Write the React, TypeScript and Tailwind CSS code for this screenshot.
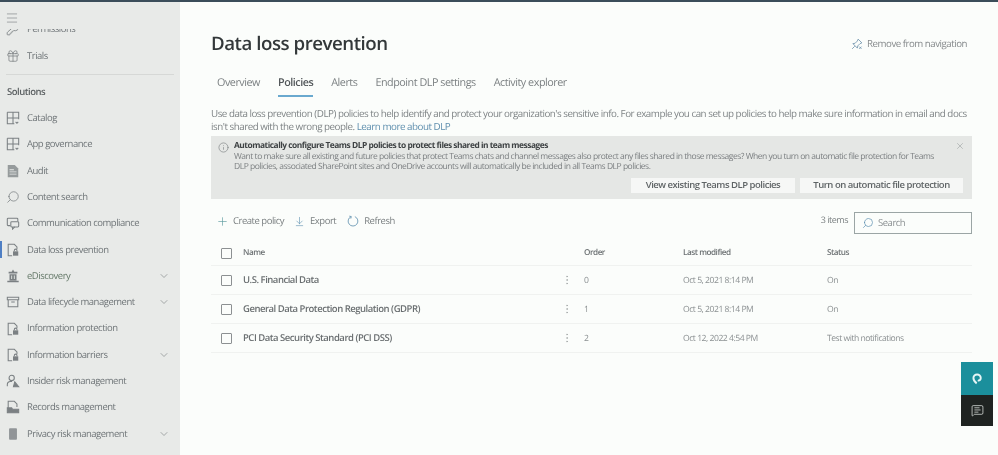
import { ArrowDownToLine, ChevronDown, Gift, Info, KeyRound, Menu, MessageSquareText, MoreVertical, Plus, Search, X } from 'lucide-react';
import type { ReactNode } from 'react';

const font = "font-['Open_Sans','Noto_Sans',sans-serif]";

function GridIcon() {
  return (
    <svg viewBox="0 0 16 16" className="w-[14px] h-[14px]" fill="none" stroke="currentColor" strokeWidth="1.2">
      <path d="M1.500 1.500h13v8M1.500 1.500v13h8M8 1.500v13M1.500 8h13" />
      <path d="M11 12.500l1.500 1.500 1.500-1.500" />
    </svg>
  );
}

function DocIcon() {
  return (
    <svg viewBox="0 0 16 16" className="w-[14px] h-[14px]" fill="currentColor">
      <path d="M2 1h8l4 4v10H2z" opacity="0.75" />
      <path d="M4 6h5v1H4zM4 8.500h8v1H4zM4 11h8v1H4z" fill="#e8eae8" />
    </svg>
  );
}

function ChatIcon() {
  return (
    <svg viewBox="0 0 16 16" className="w-[14px] h-[14px]" fill="none" stroke="currentColor" strokeWidth="1.2">
      <path d="M5 11H2.500A1 1 0 0 1 1.500 10V3.500a1 1 0 0 1 1-1h10a1 1 0 0 1 1 1V6" />
      <rect x="5.500" y="6.500" width="9" height="6" rx="1" />
      <path d="M7.500 12.500V15l2.500-2.500" />
    </svg>
  );
}

function LockDocIcon() {
  return (
    <svg viewBox="0 0 16 16" className="w-[14px] h-[14px]" fill="none" stroke="currentColor" strokeWidth="1.2">
      <path d="M7 14.500H2.500v-13h7l3 3V7" />
      <rect x="8" y="9.500" width="6" height="5" fill="currentColor" stroke="none" />
      <path d="M9.500 9.500V8.500a1.500 1.500 0 0 1 3 0v1" />
    </svg>
  );
}

function BankIcon() {
  return (
    <svg viewBox="0 0 16 16" className="w-[14px] h-[14px]" fill="currentColor">
      <path d="M8 0.500l1.500 2.500H13v2H3V3h3.500zM4 6h8v7H4zM1.500 13.500h13V15h-13z" />
      <path d="M6 7.500h1v4H6zM9 7.500h1v4H9z" fill="#e8eae8" />
    </svg>
  );
}

function ArchiveIcon() {
  return (
    <svg viewBox="0 0 16 16" className="w-[14px] h-[14px]" fill="none" stroke="currentColor" strokeWidth="1.2">
      <path d="M1.500 2.500h13v3h-13zM2.500 5.500v8h11v-8M6 8h4" />
    </svg>
  );
}

function PersonIcon() {
  return (
    <svg viewBox="0 0 16 16" className="w-[14px] h-[14px]" fill="none" stroke="currentColor" strokeWidth="1.2">
      <circle cx="6.500" cy="4.500" r="3" />
      <path d="M1.500 14v-2a3.500 3.500 0 0 1 3.500-3.500h2" />
      <path d="M10 9l4.500 5.500h-6z" fill="currentColor" />
    </svg>
  );
}

function RecordsIcon() {
  return (
    <svg viewBox="0 0 16 16" className="w-[14px] h-[14px]" fill="none" stroke="currentColor" strokeWidth="1.2">
      <path d="M2.500 9V1.500h7l3 3V8" />
      <path d="M1.500 9h5l1 1.500h7v4h-13z" fill="currentColor" />
    </svg>
  );
}

function PrivacyIcon() {
  return (
    <svg viewBox="0 0 16 16" className="w-[14px] h-[14px]" fill="currentColor">
      <path d="M4.500 1.500h7a1 1 0 0 1 1 1v11a1 1 0 0 1-1 1h-7a1 1 0 0 1-1-1v-11a1 1 0 0 1 1-1z" opacity="0.8" />
    </svg>
  );
}

function RefreshIcon() {
  return (
    <svg viewBox="0 0 16 16" className="w-[12px] h-[12px] text-[#6d9ab5]" fill="none" stroke="currentColor" strokeWidth="1.2">
      <path d="M5.500 2.200a6.500 6.500 0 1 0 5 0" />
      <path d="M3 1.500l2.700.600-.6 2.700" />
    </svg>
  );
}

function UnpinIcon() {
  return (
    <svg viewBox="0 0 16 16" className="w-[12px] h-[12px] text-[#6f93ad]" fill="none" stroke="currentColor" strokeWidth="1.1">
      <path d="M9.500 1.500l5 5-2.500 1-3 3-.5 3-6-6 3-.5 3-3z" />
      <path d="M5 11l-3.500 3.500" />
      <path d="M11 11.500l3 3M14 11.500l-3 3" />
    </svg>
  );
}

type NavItem = { label: string; icon: ReactNode; chevron?: boolean; active?: boolean };

const navItems: NavItem[] = [
  { label: 'Catalog', icon: <GridIcon /> },
  { label: 'App governance', icon: <GridIcon /> },
  { label: 'Audit', icon: <DocIcon /> },
  { label: 'Content search', icon: <Search className="w-[14px] h-[14px] -scale-x-100" strokeWidth={1.3} /> },
  { label: 'Communication compliance', icon: <ChatIcon /> },
  { label: 'Data loss prevention', icon: <LockDocIcon />, active: true },
  { label: 'eDiscovery', icon: <BankIcon />, chevron: true },
  { label: 'Data lifecycle management', icon: <ArchiveIcon />, chevron: true },
  { label: 'Information protection', icon: <LockDocIcon /> },
  { label: 'Information barriers', icon: <LockDocIcon />, chevron: true },
  { label: 'Insider risk management', icon: <PersonIcon /> },
  { label: 'Records management', icon: <RecordsIcon /> },
  { label: 'Privacy risk management', icon: <PrivacyIcon />, chevron: true },
];

const tabs = ['Overview', 'Policies', 'Alerts', 'Endpoint DLP settings', 'Activity explorer'];

const policies = [
  { name: 'U.S. Financial Data', order: '0', modified: 'Oct 5, 2021 8:14 PM', status: 'On' },
  { name: 'General Data Protection Regulation (GDPR)', order: '1', modified: 'Oct 5, 2021 8:14 PM', status: 'On' },
  { name: 'PCI Data Security Standard (PCI DSS)', order: '2', modified: 'Oct 12, 2022 4:54 PM', status: 'Test with notifications' },
];

const tableCols = 'grid grid-cols-[22px_318px_23px_99px_144px_1fr] items-center';

function Sidebar() {
  return (
    <aside className="w-[180px] shrink-0 bg-[#e8eae8] flex flex-col overflow-hidden text-[#6f7578]">
      <div className="h-[27px] shrink-0 pl-[5px] pt-[9px]">
        <Menu className="w-[14px] h-[14px] text-[#8d9294]" strokeWidth={1.3} />
      </div>
      <div className="h-[14px] shrink-0 overflow-hidden">
        <div className="-mt-[13px] h-[26px] flex items-center pl-[6px] gap-[7px]">
          <KeyRound className="w-[14px] h-[14px]" strokeWidth={1.3} />
          <span className="text-[9.5px]">Permissions</span>
        </div>
      </div>
      <div className="flex items-center h-[26px] shrink-0 pl-[6px] gap-[7px]">
        <Gift className="w-[14px] h-[14px] text-[#7b8083]" strokeWidth={1.3} />
        <span className="text-[9.5px]">Trials</span>
      </div>
      <div className="mx-[6px] mt-[5px] h-px shrink-0 bg-[#d6d8d6]" />
      <div className="h-[30px] shrink-0 flex items-center pt-[5px] pl-[7px] text-[9.5px] font-semibold text-[#5b6062]">Solutions</div>
      <nav className="flex flex-col">
        {navItems.map((item) => (
          <div key={item.label} className="relative h-[26.3px] flex items-center pl-[6px] pr-[10px] gap-[7px] shrink-0">
            {item.active && <span className="absolute left-0 top-[5px] bottom-[5px] w-[2px] bg-[#4f7fc4]" />}
            <span className="w-[14px] flex justify-center text-[#7b8083]">{item.icon}</span>
            <span className={`text-[9.5px] flex-1 whitespace-nowrap ${item.label === 'eDiscovery' ? 'text-[#667a6a]' : ''}`}>{item.label}</span>
            {item.chevron && <ChevronDown className="w-[12px] h-[12px] text-[#85898b]" strokeWidth={1.4} />}
          </div>
        ))}
      </nav>
    </aside>
  );
}

function Banner() {
  return (
    <div className="mt-[3px] h-[63px] bg-[#e5e7e5] flex flex-col pl-[7px] pr-[7px] pt-[5px]">
      <div className="flex items-start gap-[5px]">
        <Info className="w-[11px] h-[11px] mt-[1px] shrink-0 text-[#7c8082]" strokeWidth={1.4} />
        <div className="flex-1 text-[8.5px] leading-[10.500px] text-[#7b7f81]">
          <p className="font-bold text-[8.4px] text-[#3e4244]">Automatically configure Teams DLP policies to protect files shared in team messages</p>
          <p className="w-[700px]">
            Want to make sure all existing and future policies that protect Teams chats and channel messages also protect any files shared in those messages? When you turn on automatic file protection for Teams DLP policies, associated SharePoint sites and OneDrive accounts will automatically be included in all Teams DLP policies.
          </p>
        </div>
        <X className="w-[10px] h-[10px] shrink-0 text-[#9a9e9f]" strokeWidth={1.4} />
      </div>
      <div className="flex justify-end gap-[5px] mt-[5px] mr-[2px]">
        <button className="w-[164px] h-[15px] bg-[#f6f7f6] text-[9.500px] font-semibold text-[#5f6466] flex items-center justify-center">View existing Teams DLP policies</button>
        <button className="w-[163px] h-[15px] bg-[#f6f7f6] text-[9.500px] font-semibold text-[#5f6466] flex items-center justify-center">Turn on automatic file protection</button>
      </div>
    </div>
  );
}

function Toolbar() {
  return (
    <div className="flex items-center h-[24px] mt-[10px] text-[9.5px] text-[#7b8082]">
      <div className="flex items-center gap-[4px] ml-[5px]">
        <Plus className="w-[13px] h-[13px] text-[#5b9a9e]" strokeWidth={1.2} />
        <span>Create policy</span>
      </div>
      <div className="flex items-center gap-[5px] ml-[10px]">
        <ArrowDownToLine className="w-[11px] h-[11px] text-[#5d8fb0]" strokeWidth={1.3} />
        <span>Export</span>
      </div>
      <div className="flex items-center gap-[5px] ml-[11px]">
        <RefreshIcon />
        <span>Refresh</span>
      </div>
      <span className="ml-auto mr-[6px] -mt-[2px] text-[9px]">3 items</span>
      <div className="w-[118px] h-[22px] mt-[3px] border border-[#9ba5a5] flex items-center pl-[7px] gap-[4px] text-[#8a8f91]">
        <Search className="w-[12px] h-[12px] -scale-x-100 text-[#5d8fb0]" strokeWidth={1.4} />
        <span className="mt-[1px]">Search</span>
      </div>
    </div>
  );
}

function PolicyTable() {
  return (
    <div className="mt-[6px]">
      <div className={`${tableCols} h-[27px] pt-[2px] border-b border-[#f0f2f0] pl-[10px] text-[8.2px] font-semibold text-[#6d7274]`}>
        <span className="w-[11px] h-[11px] border border-[#8c9092] rounded-[1px]" />
        <span>Name</span>
        <span />
        <span>Order</span>
        <span>Last modified</span>
        <span>Status</span>
      </div>
      {policies.map((p) => (
        <div key={p.name} className={`${tableCols} h-[29px] border-b border-[#f0f2f0] pl-[10px] text-[8.6px] text-[#8b9092]`}>
          <span className="w-[11px] h-[11px] border border-[#8c9092] rounded-[1px]" />
          <span className="text-[9.5px] font-semibold text-[#6a6f71]">{p.name}</span>
          <MoreVertical className="w-[12px] h-[12px] text-[#a5a9aa]" strokeWidth={1.5} />
          <span>{p.order}</span>
          <span>{p.modified}</span>
          <span>{p.status}</span>
        </div>
      ))}
    </div>
  );
}

export default function App() {
  return (
    <div className={`${font} [text-rendering:geometricPrecision] tracking-[-0.03em] w-[998px] h-[455px] overflow-hidden flex flex-col bg-[#fbfdfb] relative blur-[0.5px]`}>
      <div className="h-[2px] shrink-0 bg-[#3b4d5a]" />
      <div className="flex flex-1 min-h-0">
        <Sidebar />
        <main className="flex-1 pl-[31px] pr-[26px] flex flex-col">
          <div className="flex items-center justify-between h-[36px] mt-[24px]">
            <h1 className="text-[18.7px] font-semibold text-[#33383a]">Data loss prevention</h1>
            <div className="flex items-center gap-[4px] mr-[5px] mt-[1px] text-[9.7px] text-[#85898b]">
              <UnpinIcon />
              <span>Remove from navigation</span>
            </div>
          </div>
          <div className="flex gap-[18px] h-[31px] mt-[4px] ml-[6px] items-center text-[10.8px] text-[#7c8183]">
            {tabs.map((t) => (
              <div key={t} className={`relative h-full flex items-center pt-[4px] ${t === 'Policies' ? 'font-semibold text-[#52575a]' : ''}`}>
                {t}
                {t === 'Policies' && <span className="absolute left-0 right-0 bottom-0 h-[2px] bg-[#6aa9cf]" />}
              </div>
            ))}
          </div>
          <p className="mt-[10px] text-[9.8px] leading-[13px] text-[#7f8486]">
            Use data loss prevention (DLP) policies to help identify and protect your organization's sensitive info. For example you can set up policies to help make sure information in email and docs isn't shared with the wrong people. <span className="text-[#5f8fae]">Learn more about DLP</span>
          </p>
          <Banner />
          <Toolbar />
          <PolicyTable />
        </main>
      </div>
      <div className="absolute right-[5px] top-[362px] w-[32px] flex flex-col">
        <div className="h-[33px] bg-[#1b8f9c] flex items-center justify-center">
          <svg viewBox="0 0 16 16" className="w-[13px] h-[13px]" fill="none" stroke="#e6f5f6" strokeWidth="2.4">
            <path d="M7 14c-3-2-4-4-4-6.500a4.500 4.500 0 0 1 9 0C12 10 10 11 8.500 10" />
          </svg>
        </div>
        <div className="h-[31px] bg-[#1f2321] flex items-center justify-center">
          <MessageSquareText className="w-[13px] h-[13px] text-[#dfe3e1]" strokeWidth={1.4} />
        </div>
      </div>
    </div>
  );
}
